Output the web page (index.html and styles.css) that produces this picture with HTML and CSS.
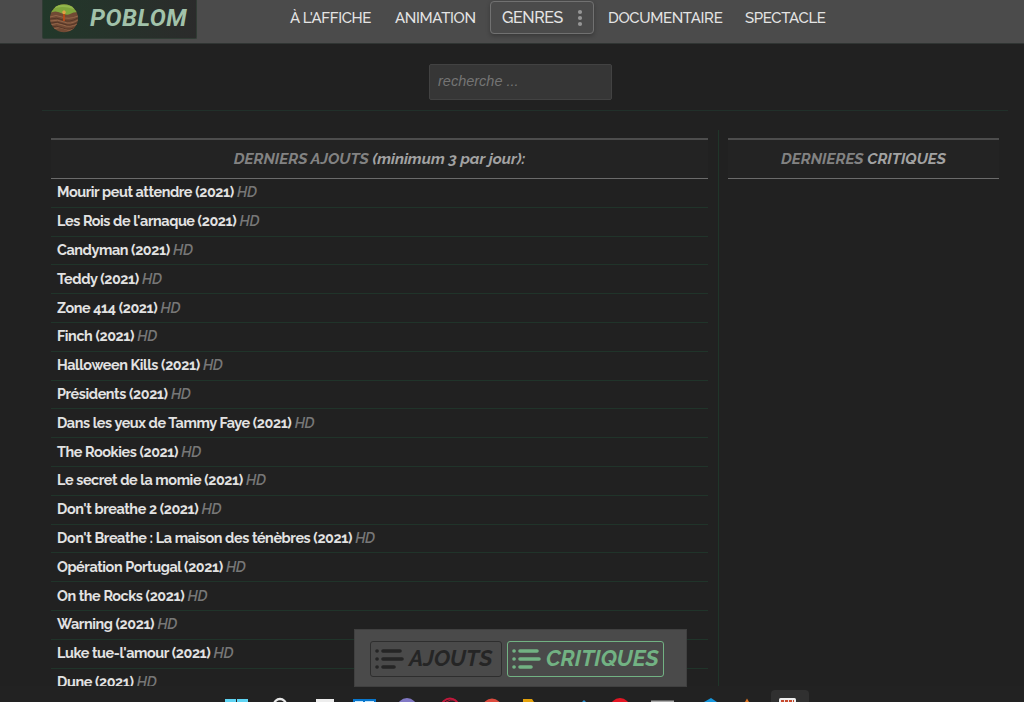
FILE: index.html
```
<!DOCTYPE html>
<html lang="fr">
<head>
    <meta charset="UTF-8">
    <meta name="viewport" content="width=device-width, initial-scale=1.0">
    <title>Poblom</title>
    <link rel="stylesheet" href="styles.css">
</head>
<body>

<header class="header">
    <a class="logo">
        <svg class="logo-icon" width="28" height="29" viewBox="0 0 28 29">
            <defs><clipPath id="round"><circle cx="14" cy="14.3" r="14"/></clipPath></defs>
            <g clip-path="url(#round)">
                <rect width="28" height="29" fill="#714a34"/>
                <path d="M0 0h28v8q-5 0-8 2t-9-1T0 9z" fill="#7fa63c"/>
                <path d="M2 4q10-4 22 0" stroke="#93b84d" stroke-width="2" fill="none"/>
                <path d="M0 13q6-3 12 0t16-1M0 17q8-2 14 1t14-2M0 21q7-3 13 0t15-1M3 25q7-3 12 0t10-1" stroke="#94664a" stroke-width="1" fill="none"/>
                <path d="M0 15q7-2 13 1t15-2M0 19q8-2 14 1t14-2M0 23q7-2 13 1t15-2" stroke="#553627" stroke-width="1" fill="none"/>
                <path d="M14 8v9" stroke="#bd4a16" stroke-width="1.8"/>
                <path d="M12 8l2-2 2 2-1 2h-2z" fill="#dfa045"/>
            </g>
        </svg>
        <span class="logo-text">POBLOM</span>
    </a>
    <nav class="menu">
        <a class="menu-link affiche">À L'AFFICHE</a>
        <a class="menu-link animation">ANIMATION</a>
        <a class="menu-button">
            <span>GENRES</span>
            <svg width="6" height="18" viewBox="0 0 6 18" fill="#969696"><circle cx="3" cy="3" r="2.1"/><circle cx="3" cy="9" r="2.1"/><circle cx="3" cy="15" r="2.1"/></svg>
        </a>
        <a class="menu-link documentaire">DOCUMENTAIRE</a>
        <a class="menu-link">SPECTACLE</a>
    </nav>
</header>

<div class="search">
    <input type="text" class="search-input" placeholder="recherche ...">
</div>

<main class="content">
    <section class="ajouts">
        <h2 class="title">DERNIERS AJOUTS <span class="light">(minimum 3 par jour):</span></h2>
        <ul class="films">
            <li><b>Mourir peut attendre (2021)</b> <i>HD</i></li>
            <li><b>Les Rois de l'arnaque (2021)</b> <i>HD</i></li>
            <li><b>Candyman (2021)</b> <i>HD</i></li>
            <li><b>Teddy (2021)</b> <i>HD</i></li>
            <li><b>Zone 414 (2021)</b> <i>HD</i></li>
            <li><b>Finch (2021)</b> <i>HD</i></li>
            <li><b>Halloween Kills (2021)</b> <i>HD</i></li>
            <li><b>Présidents (2021)</b> <i>HD</i></li>
            <li><b>Dans les yeux de Tammy Faye (2021)</b> <i>HD</i></li>
            <li><b>The Rookies (2021)</b> <i>HD</i></li>
            <li><b>Le secret de la momie (2021)</b> <i>HD</i></li>
            <li><b>Don't breathe 2 (2021)</b> <i>HD</i></li>
            <li><b>Don't Breathe : La maison des ténèbres (2021)</b> <i>HD</i></li>
            <li><b>Opération Portugal (2021)</b> <i>HD</i></li>
            <li><b>On the Rocks (2021)</b> <i>HD</i></li>
            <li><b>Warning (2021)</b> <i>HD</i></li>
            <li><b>Luke tue-l'amour (2021)</b> <i>HD</i></li>
            <li><b>Dune (2021)</b> <i>HD</i></li>
        </ul>
    </section>
    <section class="critiques">
        <h2 class="title">DERNIERES <span class="light">CRITIQUES</span></h2>
    </section>
</main>

<div class="tabs">
    <a class="tab">
        <svg class="tab-icon" width="29" height="22" viewBox="0 0 29 22"><path d="M2 3h.1M2 11h.1M2 19h.1M8 3h17M8 11h19M8 19h11" stroke="currentColor" stroke-width="3.6" stroke-linecap="round"/></svg>
        <span>AJOUTS</span>
    </a>
    <a class="tab active">
        <svg class="tab-icon" width="29" height="22" viewBox="0 0 29 22"><path d="M2 3h.1M2 11h.1M2 19h.1M8 3h17M8 11h19M8 19h11" stroke="currentColor" stroke-width="3.6" stroke-linecap="round"/></svg>
        <span>CRITIQUES</span>
    </a>
</div>

<footer class="taskbar">
    <svg width="1024" height="16" viewBox="0 0 1024 16">
        <rect x="771" y="4" width="38" height="20" rx="4" fill="#303030"/>
        <path d="M225 13h11v3h-11zM237 13h11v3h-11z" fill="#5fd5f4"/>
        <circle cx="280" cy="19" r="6" fill="none" stroke="#e8e8e8" stroke-width="2.4"/>
        <rect x="316" y="13" width="18" height="4" fill="#ededed"/>
        <rect x="353" y="13" width="23" height="4" fill="#0877ce"/>
        <path d="M355 15h8v1h-8zM365 15h9v1h-9z" fill="#c2e5fb"/>
        <circle cx="407" cy="22" r="10" fill="#8178c4"/>
        <circle cx="450" cy="21" r="8.5" fill="none" stroke="#c2183c" stroke-width="2"/>
        <path d="M446 16q4-3 10-2" stroke="#c2183c" fill="none"/>
        <circle cx="492" cy="22" r="9.5" fill="#dc4b3e"/>
        <path d="M523 13h9l2 3h-11z" fill="#e5a20b"/>
        <path d="M582 16l2-2 2 2z" fill="#2d91d0"/>
        <circle cx="620" cy="22" r="10" fill="#e41624"/>
        <rect x="651" y="14.5" width="23" height="2" fill="#aaa"/>
        <path d="M704 16l7-4 6 4z" fill="#1697dd"/>
        <path d="M745 16l2-3.5 2 3.5z" fill="#df7622"/>
        <rect x="779" y="12" width="17" height="6" rx="1.5" fill="#eee"/>
        <path d="M781 15h13" stroke="#c74a2e" stroke-width="2" stroke-dasharray="3 1"/>
    </svg>
</footer>

</body>
</html>
```
FILE: styles.css
```
* {
    box-sizing: border-box;
}

body {
    background: #212121;
    color: #e2e2e2;
    font-family: Raleway, Lato, sans-serif;
    height: 702px;
    margin: 0;
    overflow: hidden;
    display: flex;
    flex-direction: column;
}

/* Header */
.header {
    height: 44px;
    flex: none;
    display: flex;
    align-items: flex-start;
    padding-left: 42px;
    background: #4b4b4b;
    border-bottom: 1px solid #303533;
}

.logo {
    width: 155px;
    height: 39px;
    display: flex;
    padding: 4px 0 0 7px;
    background: linear-gradient(to right, #22382a, #2b2b2b);
    border: 1px solid #303c34;
    border-top: 0;
    border-radius: 0 0 2px 2px;
}

.logo-text {
    margin-left: 12px;
    font: italic bold 24px/29px Roboto, sans-serif;
    letter-spacing: 0.5px;
    color: #a2c2aa;
}

/* Menu */
.menu {
    display: flex;
    align-items: center;
    margin: 1px 0 0 93px;
    height: 33px;
}

.menu-link {
    padding-top: 2px;
    font-size: 15px;
    font-weight: 500;
    letter-spacing: -0.34px;
    line-height: 31px;
    color: #e4e4e4;
    white-space: nowrap;
}

.affiche {
    width: 105px;
}

.animation {
    width: 95px;
}

.documentaire {
    width: 137px;
}

.menu-button {
    width: 104px;
    height: 33px;
    display: flex;
    align-items: center;
    justify-content: space-between;
    padding: 0 10px 0 11px;
    margin-right: 14px;
    font-size: 16px;
    font-weight: 500;
    letter-spacing: -0.4px;
    color: #e4e4e4;
    border: 1px solid #717171;
    border-radius: 4px;
    box-shadow: 0 2px 4px rgba(0, 0, 0, 0.25);
}

/* Search */
.search {
    height: 67px;
    flex: none;
    margin: 0 16px 0 42px;
    padding: 20px 0 0 387px;
    border-bottom: 1px solid #21302a;
}

.search-input {
    display: block;
    width: 183px;
    height: 36px;
    padding: 0 8px 3px;
    background: #363636;
    border: 1px solid #424242;
    border-radius: 2px;
    font: italic 14.5px "Liberation Sans", Arial, sans-serif;
}

.search-input::placeholder {
    color: #747474;
}

/* Columns */
.content {
    flex: 1;
    min-height: 0;
    overflow: hidden;
    display: flex;
    margin: 19px 25px 0 51px;
}

.ajouts {
    width: 668px;
    padding: 8px 10px 0 0;
    border-right: 1px solid #20352a;
}

.critiques {
    flex: 1;
    padding: 8px 0 0 9px;
}

.title {
    height: 41px;
    margin: 0;
    border-top: 2px solid #4d4d4d;
    border-bottom: 1px solid #6b6b6b;
    background: #232323;
    font-size: 15.5px;
    line-height: 38px;
    font-style: italic;
    font-weight: bold;
    text-align: center;
    color: #828282;
}

.light {
    color: #a2a2a2;
}

.films {
    list-style: none;
    margin: 0;
    padding: 0;
}

.films li {
    height: 28.8px;
    padding: 0.4px 0 0 6px;
    border-bottom: 1px solid #20342a;
    font-size: 14.4px;
    letter-spacing: -0.41px;
    line-height: 26px;
    white-space: nowrap;
}

.films i {
    color: #777;
    font-weight: 600;
}

/* Floating tabs */
.tabs {
    position: absolute;
    left: 354px;
    top: 629px;
    width: 333px;
    height: 58px;
    display: flex;
    gap: 5px;
    padding: 11px 15px 0;
    background: #4a4a4a;
    border: 1px solid #404040;
}

.tab {
    height: 36px;
    width: 132px;
    display: flex;
    align-items: center;
    padding: 0 4px;
    border: 1px solid #2e2e2e;
    border-radius: 3px;
    color: #252525;
    font-size: 22.2px;
    font-weight: bold;
    font-style: italic;
}

.tab span {
    margin: -3px 0 0 5px;
}

.tab.active {
    width: 157px;
    color: #72b283;
    border-color: #72b283;
}

/* Taskbar */
.taskbar {
    height: 16px;
    flex: none;
    background: #222;
}

.taskbar svg {
    display: block;
}
```
